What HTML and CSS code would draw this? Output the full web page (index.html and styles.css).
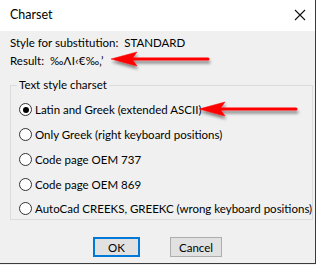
FILE: index.html
```html
<!DOCTYPE html>
<html lang="en">
<head>
    <meta charset="UTF-8">
    <title>Charset</title>
    <link rel="stylesheet" href="styles.css">
</head>
<body>
    <div class="dialog">
        <div class="titlebar">
            <span class="title">Charset</span>
            <svg class="close" width="12" height="12" viewBox="0 0 12 12">
                <path d="M1 1 L11 11 M11 1 L1 11" stroke="#111" stroke-width="1.1" fill="none"/>
            </svg>
        </div>
        <div class="content">
            <div class="line">Style for substitution:&nbsp; STANDARD</div>
            <div class="line">Result:&nbsp; <span class="result">‰ΛΙ‹€‰‚’</span></div>

            <fieldset class="group">
                <legend>Text style charset</legend>
                <label class="option"><span class="radio checked"></span>Latin and Greek (extended ASCII)</label>
                <label class="option"><span class="radio"></span>Only Greek (right keyboard positions)</label>
                <label class="option"><span class="radio"></span>Code page OEM 737</label>
                <label class="option"><span class="radio"></span>Code page OEM 869</label>
                <label class="option"><span class="radio"></span>AutoCad CREEKS, GREEKC (wrong keyboard positions)</label>
            </fieldset>

            <div class="buttons">
                <button type="button" class="btn default">OK</button>
                <button type="button" class="btn cancel">Cancel</button>
            </div>
        </div>

        <!-- red annotation arrows drawn over the dialog -->
        <svg class="arrows" width="315" height="263" viewBox="0 0 315 263">
            <defs>
                <filter id="shade" x="-10%" y="-50%" width="130%" height="250%">
                    <feDropShadow dx="1" dy="3" stdDeviation="1.6" flood-color="#000" flood-opacity="0.45"/>
                </filter>
            </defs>
            <g fill="#f00" stroke="#f00" filter="url(#shade)">
                <path d="M111 59 L137 52 L132 59 L137 66 Z" stroke-width="0.5"/>
                <line x1="132" y1="59" x2="208" y2="59" stroke-width="3" stroke-linecap="round"/>
                <path d="M199 109 L225 102 L220 109 L225 116 Z" stroke-width="0.5"/>
                <line x1="220" y1="109" x2="296" y2="109" stroke-width="3" stroke-linecap="round"/>
            </g>
        </svg>
    </div>
</body>
</html>
```

FILE: styles.css
```css
body {
    margin: 0;
    background-color: #f0f0f0;
    font-family: Lato, 'Liberation Sans', sans-serif;
    font-size: 11.5px;
    color: #000;
}

.dialog {
    position: relative;
    width: 315px;
    height: 263px;
    border-right: 1px solid #3a3a3a;
    border-bottom: 1px solid #3a3a3a;
    background-color: #f0f0f0;
}

.titlebar {
    display: flex;
    align-items: center;
    justify-content: space-between;
    height: 31px;
    padding: 0 9px 2px 10px;
    box-sizing: border-box;
    background-color: #fff;
}

.title {
    font-size: 12.5px;
}

.close {
    margin-top: 1px;
}

.content {
    padding: 3px 8px 0 10px;
}

.line {
    height: 18px;
    line-height: 18px;
}

.result {
    letter-spacing: 0.3px;
}

.group {
    margin: 8px 0 0 0;
    padding: 5px 0 0 8px;
    width: 287px;
    border: 1px solid #dcdcdc;
}

.group legend {
    padding: 0 2px;
    margin-left: -2px;
    line-height: 14px;
}

.option {
    display: flex;
    align-items: center;
    height: 25px;
    white-space: nowrap;
}

.option:last-child {
    height: 22px;
}

.radio {
    width: 11px;
    height: 11px;
    margin-right: 3px;
    border: 1px solid #333;
    border-radius: 50%;
    background-color: #fff;
    display: flex;
    align-items: center;
    justify-content: center;
}

.radio.checked::after {
    content: '';
    width: 6px;
    height: 6px;
    border-radius: 50%;
    background-color: #000;
}

.buttons {
    display: flex;
    justify-content: center;
    gap: 30px;
    margin-top: 17px;
    padding-right: 2px;
}

.btn {
    font-family: Lato, 'Liberation Sans', sans-serif;
    font-size: 11.5px;
    height: 20px;
    padding: 0;
    background-color: #e1e1e1;
    border: 1px solid #adadad;
    color: #000;
}

.btn.default {
    width: 47px;
    border: 2px solid #0078d7;
}

.btn.cancel {
    width: 52px;
}

.arrows {
    position: absolute;
    left: 0;
    top: 0;
    pointer-events: none;
}
```
